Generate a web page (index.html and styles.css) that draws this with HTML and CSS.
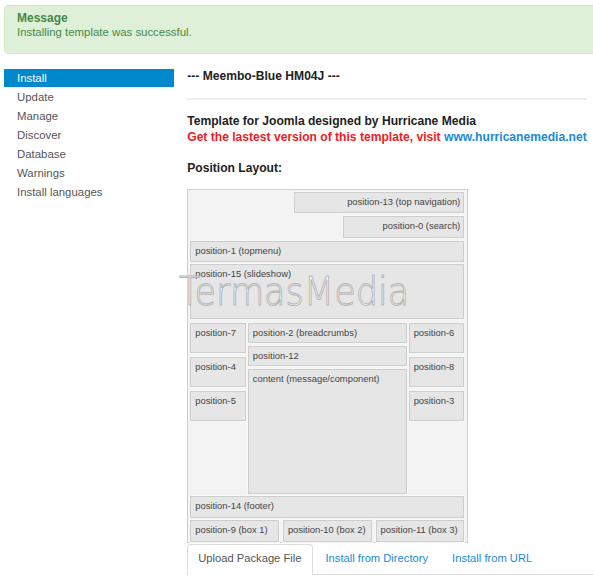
FILE: index.html
```html
<!DOCTYPE html>
<html>
<head>
<meta charset="utf-8">
<link rel="stylesheet" href="styles.css">
</head>
<body>
<div class="msg">
  <div class="msg-title">Message</div>
  <div class="msg-text">Installing template was successful.</div>
</div>
<div class="wrap">
  <ul class="side">
    <li class="active">Install</li>
    <li>Update</li>
    <li>Manage</li>
    <li>Discover</li>
    <li>Database</li>
    <li>Warnings</li>
    <li>Install languages</li>
  </ul>
  <div class="main">
    <div class="bold title">--- Meembo-Blue HM04J ---</div>
    <div class="rule"></div>
    <div class="bold">Template for Joomla designed by Hurricane Media</div>
    <div class="bold red">Get the lastest version of this template, visit <span class="link">www.hurricanemedia.net</span></div>
    <div class="bold plabel">Position Layout:</div>
    <div class="layout">
      <div class="head">
        <div class="box r w13">position-13 (top navigation)</div>
        <div class="box r w0">position-0 (search)</div>
      </div>
      <div class="box h21 mt3">position-1 (topmenu)</div>
      <div class="box slide">position-15 (slideshow)</div>
      <div class="cols">
        <div class="col side-col">
          <div class="box h30">position-7</div>
          <div class="box h30">position-4</div>
          <div class="box h30">position-5</div>
        </div>
        <div class="col mid-col">
          <div class="box h20">position-2 (breadcrumbs)</div>
          <div class="box h20">position-12</div>
          <div class="box content">content (message/component)</div>
        </div>
        <div class="col side-col">
          <div class="box h30">position-6</div>
          <div class="box h30">position-8</div>
          <div class="box h30">position-3</div>
        </div>
      </div>
      <div class="box h22 mt2">position-14 (footer)</div>
      <div class="bottom">
        <div class="box h22">position-9 (box 1)</div>
        <div class="box h22">position-10 (box 2)</div>
        <div class="box h22">position-11 (box 3)</div>
      </div>
      <div class="watermark">TermasMedia</div>
    </div>
    <div class="tabs">
      <div class="tab active">Upload Package File</div>
      <div class="tab">Install from Directory</div>
      <div class="tab">Install from URL</div>
    </div>
  </div>
</div>
</body>
</html>
```
FILE: styles.css
```css
html, body {
  margin: 0;
  padding: 0;
  background: #fff;
  overflow: hidden;
}
body {
  font-family: "Liberation Sans", Arial, sans-serif;
  font-size: 11.4px;
  color: #333;
}
.msg {
  margin: 5px -10px 0 4px;
  height: 49px;
  box-sizing: border-box;
  background: #dff0d8;
  border: 1px solid #d6e9c6;
  border-radius: 4px;
  padding: 6px 0 0 12px;
  color: #468847;
  line-height: 13px;
}
.msg-title {
  font-weight: bold;
  font-size: 12px;
}
.msg-text {
  margin-top: 1px;
}
.wrap {
  display: flex;
  margin-top: 15px;
}
.side {
  list-style: none;
  margin: 0 0 0 4px;
  padding: 0;
  width: 172px;
}
.side li {
  height: 19px;
  line-height: 19px;
  padding-left: 13px;
  color: #555;
}
.side li.active {
  background: #0088cc;
  color: #fff;
  height: 18px;
  margin-bottom: 1px;
}
.main {
  margin-left: 13px;
  width: 410px;
  position: relative;
  white-space: nowrap;
}
.bold {
  font-weight: bold;
  font-size: 12.1px;
  line-height: 16px;
  color: #222;
}
.title {
  margin-top: -1px;
}
.rule {
  height: 0;
  border-top: 2px solid #eee;
  margin: 14px 0 13px;
  width: 400px;
}
.red {
  color: #ee1c25;
}
.link {
  color: #1a8bd1;
}
.plabel {
  margin-top: 15px;
}
.layout {
  margin-top: 13px;
  width: 281px;
  box-sizing: border-box;
  border: 1px solid #cfcfcf;
  background: #f3f3f3;
  padding: 2px 3px 0 2px;
  position: relative;
  font-size: 9.4px;
  color: #444;
  font-family: "Liberation Sans", Arial, sans-serif;
}
.box {
  box-sizing: border-box;
  background: #e6e6e6;
  border: 1px solid #cdcdcd;
  box-shadow: 0 0 0 1px #f8f8f8;
  padding: 3px 3px 0 4px;
  line-height: 12px;
  overflow: hidden;
}
.r {
  text-align: right;
}
.head {
  display: flex;
  flex-direction: column;
  align-items: flex-end;
  gap: 3px;
}
.w13 { width: 170px; height: 21px; }
.w0 { width: 121px; height: 22px; }
.h20 { height: 20px; }
.h21 { height: 21px; }
.h22 { height: 22px; }
.h30 { height: 30px; }
.mt3 { margin-top: 3px; }
.mt2 { margin-top: 2px; }
.slide {
  height: 55px;
  margin-top: 2px;
}
.cols {
  display: flex;
  gap: 2px;
  margin-top: 4px;
}
.col {
  display: flex;
  flex-direction: column;
  gap: 3px;
}
.side-col {
  width: 56px;
  gap: 4px;
}
.mid-col {
  width: 160px;
}
.content {
  height: 125px;
}
.bottom {
  display: flex;
  gap: 4px;
  margin-top: 2px;
}
.bottom .box {
  flex: 1;
}
.watermark {
  position: absolute;
  left: -9px;
  top: 82px;
  font-family: "DejaVu Sans", sans-serif;
  font-weight: 200;
  font-size: 39px;
  line-height: 39px;
  color: rgba(255,255,255,0.85);
  -webkit-text-stroke: 1px #b5b5b5;
  transform: scaleX(0.9);
  transform-origin: left top;
}
.tabs {
  display: flex;
  border-bottom: 1px solid #ddd;
  margin-right: -20px;
  margin-top: 1px;
}
.tab {
  padding: 6px 11px 0 11px;
  height: 24px;
  line-height: 14px;
  font-size: 11.2px;
  color: #1a8bd1;
  margin-right: 0;
  margin-bottom: -1px;
  border: 1px solid transparent;
  border-bottom: none;
}
.tab.active {
  color: #555;
  background: #fff;
  border-color: #ddd;
  border-radius: 4px 4px 0 0;
  padding-left: 10px;
}
```
